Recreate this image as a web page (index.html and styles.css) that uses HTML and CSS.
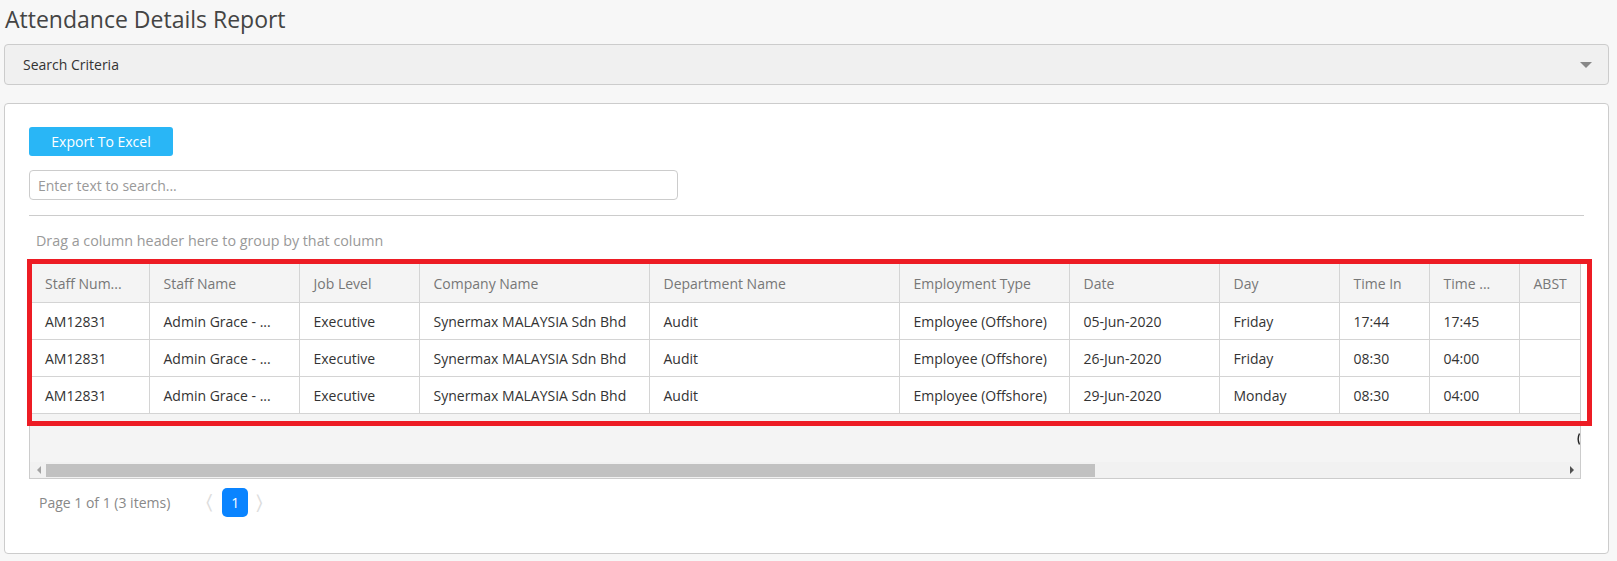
FILE: index.html
```html
<!DOCTYPE html>
<html>
<head>
<meta charset="utf-8">
<link rel="stylesheet" href="styles.css">
</head>
<body>
<div class="page">
  <h1 class="title">Attendance Details Report</h1>
  <div class="criteria">
    <span>Search Criteria</span>
    <span class="caret"></span>
  </div>
  <div class="panel">
    <button class="btn-export">Export To Excel</button>
    <input class="search" type="text" placeholder="Enter text to search...">
    <div class="rule"></div>
    <div class="group-panel">Drag a column header here to group by that column</div>
    <div class="grid-wrap">
      <div class="grid">
        <div class="grid-body">
          <table class="table">
            <colgroup>
              <col class="w119"><col class="w150"><col class="w120"><col class="w230"><col class="w250"><col class="w170"><col class="w150"><col class="w120"><col class="w90"><col class="w90"><col class="w90">
            </colgroup>
            <thead>
              <tr>
                <th>Staff Num...</th><th>Staff Name</th><th>Job Level</th><th>Company Name</th><th>Department Name</th><th>Employment Type</th><th>Date</th><th>Day</th><th>Time In</th><th>Time ...</th><th>ABST</th>
              </tr>
            </thead>
            <tbody>
              <tr><td>AM12831</td><td>Admin Grace - ...</td><td>Executive</td><td>Synermax MALAYSIA Sdn Bhd</td><td>Audit</td><td>Employee (Offshore)</td><td>05-Jun-2020</td><td>Friday</td><td>17:44</td><td>17:45</td><td></td></tr>
              <tr><td>AM12831</td><td>Admin Grace - ...</td><td>Executive</td><td>Synermax MALAYSIA Sdn Bhd</td><td>Audit</td><td>Employee (Offshore)</td><td>26-Jun-2020</td><td>Friday</td><td>08:30</td><td>04:00</td><td></td></tr>
              <tr><td>AM12831</td><td>Admin Grace - ...</td><td>Executive</td><td>Synermax MALAYSIA Sdn Bhd</td><td>Audit</td><td>Employee (Offshore)</td><td>29-Jun-2020</td><td>Monday</td><td>08:30</td><td>04:00</td><td></td></tr>
            </tbody>
          </table>
          <div class="grid-footer">
            <svg class="clip-mark" width="4" height="12" viewBox="0 0 4 12"><path d="M3.5 0.5 Q0.8 6 3.5 11.5" fill="none" stroke="#222" stroke-width="1.4"/></svg>
          </div>
        </div>
        <div class="hscroll">
          <span class="arrow-left"></span>
          <div class="thumb"></div>
          <span class="arrow-right"></span>
        </div>
      </div>
      <div class="highlight"></div>
    </div>
    <div class="pager">
      <span class="pager-info">Page 1 of 1 (3 items)</span>
      <span class="chev">&#x2329;</span>
      <span class="page-num">1</span>
      <span class="chev">&#x232A;</span>
    </div>
  </div>
</div>
</body>
</html>
```
FILE: styles.css
```css
html, body {
  margin: 0;
  padding: 0;
  background: #f7f7f7;
  font-family: "Open Sans", "Noto Sans", sans-serif;
  font-size: 14px;
  color: #333;
}
.page {
  padding: 0 8px 0 4px;
}
.title {
  margin: 0;
  padding: 2px 0 0 1px;
  height: 42px;
  font-size: 23px;
  font-weight: 400;
  line-height: 34px;
  color: #444;
}
.criteria {
  height: 39px;
  border: 1px solid #ccc;
  border-radius: 4px;
  background: #f0f0f0;
  display: flex;
  align-items: center;
  justify-content: space-between;
  padding: 0 16px 0 18px;
  color: #333;
}
.caret {
  width: 0;
  height: 0;
  border-left: 6px solid transparent;
  border-right: 6px solid transparent;
  border-top: 6px solid #888;
}
.panel {
  margin-top: 18px;
  border: 1px solid #ccc;
  border-radius: 4px;
  background: #fff;
  padding: 23px 24px 0 24px;
  box-sizing: border-box;
  height: 451px;
}
.btn-export {
  display: block;
  width: 144px;
  height: 29px;
  border: none;
  border-radius: 3px;
  background: #29b6f6;
  color: #fff;
  font-family: inherit;
  font-size: 14px;
  padding: 0;
}
.search {
  display: block;
  margin-top: 14px;
  width: 649px;
  height: 30px;
  box-sizing: border-box;
  border: 1px solid #ccc;
  border-radius: 4px;
  padding: 0 8px;
  font-family: inherit;
  font-size: 14px;
  color: #333;
}
.search::placeholder {
  color: #999;
}
.rule {
  margin-top: 15px;
  height: 1px;
  background: #ccc;
}
.group-panel {
  height: 47px;
  line-height: 50px;
  padding-left: 7px;
  color: #999;
  font-size: 14.3px;
}
.grid-wrap {
  position: relative;
  margin-right: 3px;
}
.grid {
  border: 1px solid #ccc;
  background: #f4f4f4;
  overflow: hidden;
}
.grid-body {
  overflow: hidden;
}
.table {
  border-collapse: collapse;
  table-layout: fixed;
  width: 1579px;
}
.w119 { width: 119px; }
.w120 { width: 120px; }
.w150 { width: 150px; }
.w230 { width: 230px; }
.w250 { width: 250px; }
.w170 { width: 170px; }
.w90 { width: 90px; }
.table th, .table td {
  border-right: 1px solid #d4d4d4;
  border-bottom: 1px solid #d4d4d4;
  text-align: left;
  padding: 0 14px;
  white-space: nowrap;
  overflow: hidden;
  font-weight: 400;
}
.table th {
  height: 38px;
  background: #f4f4f4;
  color: #777;
}
.table td {
  height: 36px;
  background: #fff;
  color: #333;
}
.table th:first-child, .table td:first-child {
  padding-left: 15px;
}
.grid-footer {
  height: 48px;
  position: relative;
}
.clip-mark {
  position: absolute;
  right: 0;
  top: 19px;
}
.hscroll {
  height: 16px;
  background: #f1f1f1;
  display: flex;
  align-items: center;
  padding: 0 6px 0 7px;
}
.arrow-left {
  width: 0;
  height: 0;
  border-top: 4px solid transparent;
  border-bottom: 4px solid transparent;
  border-right: 4px solid #a3a3a3;
}
.thumb {
  margin-left: 5px;
  width: 1049px;
  height: 13px;
  background: #c1c1c1;
}
.arrow-right {
  margin-left: auto;
  width: 0;
  height: 0;
  border-top: 4px solid transparent;
  border-bottom: 4px solid transparent;
  border-left: 4px solid #505050;
}
.highlight {
  position: absolute;
  left: -2px;
  top: -4px;
  width: 1565px;
  height: 167px;
  box-sizing: border-box;
  border: 5px solid #ed1c24;
  pointer-events: none;
}
.pager {
  display: flex;
  align-items: center;
  height: 28px;
  margin-top: 9px;
  padding-left: 10px;
  color: #888;
}
.pager-info {
  margin-right: 36px;
}
.chev {
  color: #ddd;
  font-size: 20px;
  line-height: 28px;
}
.page-num {
  margin: 0 8px 0 9px;
  width: 26px;
  height: 29px;
  border-radius: 5px;
  background: #0a84ff;
  color: #fff;
  display: flex;
  align-items: center;
  justify-content: center;
}
```
